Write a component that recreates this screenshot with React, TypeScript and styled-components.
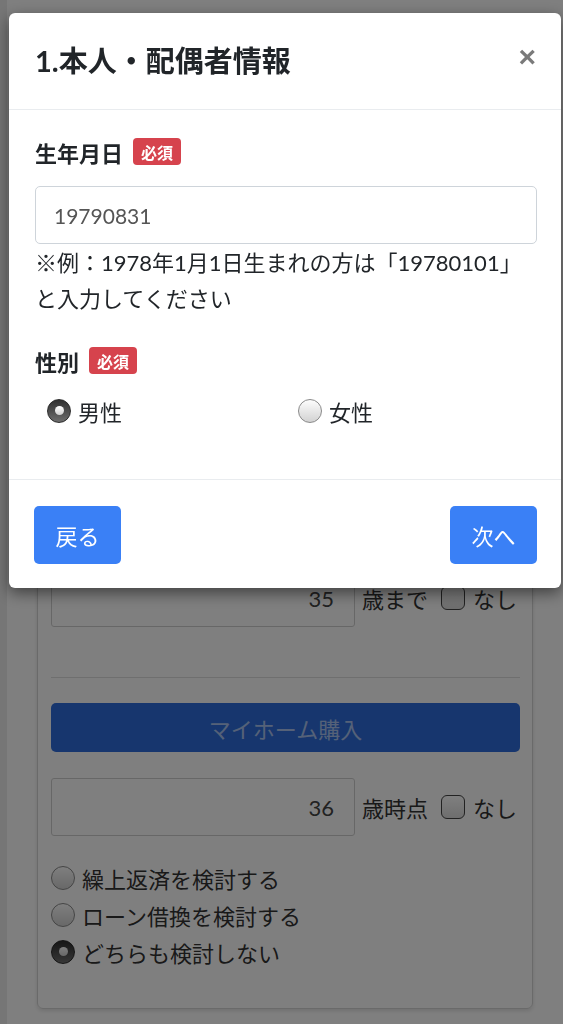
import styled, { createGlobalStyle } from 'styled-components';

const GlobalStyle = createGlobalStyle`
  html, body {
    margin: 0;
    padding: 0;
  }
  body {
    background: #ececec;
    font-family: Lato, "Noto Sans CJK JP", sans-serif;
    color: #212529;
  }
`;

const FONT = `Lato, "Noto Sans CJK JP", sans-serif`;

/* ---------- page behind the modal ---------- */

const Page = styled.div`
  width: 563px;
  height: 1024px;
  overflow: hidden;
  padding-left: 7px;
  box-sizing: border-box;
`;

const Sheet = styled.div`
  background: #ffffff;
  min-height: 1024px;
  padding: 92px 30px 16px 30px;
  box-sizing: border-box;
`;

const Card = styled.div`
  border: 1px solid #d4d4d4;
  border-radius: 6px;
  box-shadow: 0 2px 4px rgba(0, 0, 0, 0.12);
  padding: 24px 12px 38px 13px;
`;

const Section = styled.div`
  display: flex;
  flex-direction: column;
  gap: 26px;
`;

const Divider = styled.div`
  height: 1px;
  background: #dedede;
  margin: 50px 0 25px;
`;

const EventButton = styled.div`
  height: 49px;
  border-radius: 5px;
  background: #2e6ddc;
  color: rgba(255, 255, 255, 0.6);
  font-size: 22px;
  display: flex;
  align-items: center;
  justify-content: center;
`;

const FieldRow = styled.div`
  display: flex;
  align-items: center;
  font-size: 22px;
  color: #333;
`;

const NumInput = styled.div`
  width: 304px;
  height: 58px;
  box-sizing: border-box;
  border: 1px solid #cfcfcf;
  border-radius: 3px;
  display: flex;
  align-items: center;
  justify-content: flex-end;
  padding-right: 20px;
  font-size: 22px;
  color: #444;
`;

const Unit = styled.span`
  margin-left: 7px;
`;

const CheckBox = styled.span`
  margin-left: 13px;
  width: 22px;
  height: 22px;
  border: 1.5px solid #444;
  border-radius: 6px;
  background: linear-gradient(#ffffff, #dcdcdc);
`;

const NoneLabel = styled.span`
  margin-left: 8px;
`;

const RadioList = styled.div`
  display: flex;
  flex-direction: column;
  margin-top: -3px;
`;

const RadioRow = styled.label`
  height: 37px;
  display: flex;
  align-items: center;
  gap: 7px;
  font-size: 22px;
  color: #333;
`;

/* ---------- radio drawing ---------- */

const RadioDot = styled.span<{ $checked?: boolean }>`
  position: relative;
  flex: none;
  width: 24px;
  height: 24px;
  box-sizing: border-box;
  border-radius: 50%;
  border: 1px solid ${(p) => (p.$checked ? '#2c2c2c' : '#8a8a8a')};
  background: ${(p) =>
    p.$checked
      ? 'linear-gradient(#2e2e2e, #6e6e6e)'
      : 'linear-gradient(#fdfdfd, #d2d2d2)'};

  &::after {
    content: '';
    display: ${(p) => (p.$checked ? 'block' : 'none')};
    position: absolute;
    left: 50%;
    top: 50%;
    width: 9px;
    height: 9px;
    margin: -4.5px 0 0 -4.5px;
    border-radius: 50%;
    background: linear-gradient(#ffffff, #d0d0d0);
  }
`;

/* ---------- modal ---------- */

const Overlay = styled.div`
  position: fixed;
  inset: 0;
  background: rgba(0, 0, 0, 0.5);
  padding: 13px 2px 0 9px;
  display: flex;
  align-items: flex-start;
`;

const Modal = styled.div`
  flex: 1;
  background: #ffffff;
  border-radius: 6px;
  box-shadow: 0 5px 15px rgba(0, 0, 0, 0.5);
`;

const ModalHeader = styled.div`
  display: flex;
  align-items: center;
  justify-content: space-between;
  padding: 27px 25px 27px 26px;
  border-bottom: 1px solid #e9ecef;
`;

const Title = styled.h5`
  margin: 0;
  font-size: 29px;
  line-height: 42px;
  font-weight: 700;
  color: #212529;
`;

const Close = styled.span`
  font-family: 'Liberation Sans', Arial, sans-serif;
  font-size: 30px;
  font-weight: 700;
  line-height: 1;
  color: #7a7a7a;
  margin-top: -8px;
`;

const ModalBody = styled.div`
  padding: 25px 24px 52px 26px;
`;

const Label = styled.div<{ $gap?: number }>`
  display: flex;
  align-items: center;
  height: 33px;
  font-size: 22px;
  font-weight: 700;
  color: #212529;
  margin-top: ${(p) => p.$gap ?? 0}px;
`;

const Badge = styled.span`
  margin-left: 10px;
  height: 27px;
  padding: 0 8px;
  border-radius: 4px;
  background: #d6434d;
  color: #ffffff;
  font-size: 16px;
  font-weight: 700;
  display: flex;
  align-items: center;
`;

const DateInput = styled.input`
  display: block;
  width: 100%;
  height: 58px;
  box-sizing: border-box;
  margin-top: 18px;
  padding: 0 18px;
  border: 1px solid #ced4da;
  border-radius: 5px;
  font-family: ${FONT};
  font-size: 21px;
  color: #555;
  outline: none;
`;

const Help = styled.p`
  margin: 1px 0 0;
  font-size: 22px;
  line-height: 36px;
  color: #212529;
`;

const GenderRow = styled.div`
  display: grid;
  grid-template-columns: 1fr 1fr;
  margin-top: 17px;
`;

const GenderOption = styled.label`
  display: flex;
  align-items: center;
  gap: 7px;
  height: 33px;
  padding-left: 12px;
  font-size: 22px;
  color: #212529;
`;

const ModalFooter = styled.div`
  display: flex;
  justify-content: space-between;
  padding: 26px 24px 24px 25px;
  border-top: 1px solid #e9ecef;
`;

const Button = styled.button`
  width: 87px;
  height: 58px;
  border: none;
  border-radius: 5px;
  background: #3a80f6;
  color: #ffffff;
  font-family: ${FONT};
  font-size: 22px;
  padding: 0;
`;

export default function App() {
  return (
    <>
      <GlobalStyle />
      <Page>
        <Sheet>
          <Card>
            <Section>
              <EventButton>結婚</EventButton>
              <FieldRow>
                <NumInput>30</NumInput>
                <Unit>歳時点</Unit>
                <CheckBox />
                <NoneLabel>なし</NoneLabel>
              </FieldRow>
              <FieldRow>
                <NumInput>2</NumInput>
                <Unit>人</Unit>
              </FieldRow>
            </Section>
            <Divider />
            <Section>
              <EventButton>子育て</EventButton>
              <FieldRow>
                <NumInput>32</NumInput>
                <Unit>歳から</Unit>
                <CheckBox />
                <NoneLabel>なし</NoneLabel>
              </FieldRow>
              <FieldRow>
                <NumInput>35</NumInput>
                <Unit>歳まで</Unit>
                <CheckBox />
                <NoneLabel>なし</NoneLabel>
              </FieldRow>
            </Section>
            <Divider />
            <Section>
              <EventButton>マイホーム購入</EventButton>
              <FieldRow>
                <NumInput>36</NumInput>
                <Unit>歳時点</Unit>
                <CheckBox />
                <NoneLabel>なし</NoneLabel>
              </FieldRow>
              <RadioList>
                <RadioRow>
                  <RadioDot />
                  繰上返済を検討する
                </RadioRow>
                <RadioRow>
                  <RadioDot />
                  ローン借換を検討する
                </RadioRow>
                <RadioRow>
                  <RadioDot $checked />
                  どちらも検討しない
                </RadioRow>
              </RadioList>
            </Section>
          </Card>
        </Sheet>
      </Page>

      <Overlay>
        <Modal>
          <ModalHeader>
            <Title>1.本人・配偶者情報</Title>
            <Close>×</Close>
          </ModalHeader>
          <ModalBody>
            <Label>
              生年月日<Badge>必須</Badge>
            </Label>
            <DateInput readOnly value="19790831" />
            <Help>
              ※例：1978年1月1日生まれの方は「19780101」と入力してください
            </Help>
            <Label $gap={27}>
              性別<Badge>必須</Badge>
            </Label>
            <GenderRow>
              <GenderOption>
                <RadioDot $checked />
                男性
              </GenderOption>
              <GenderOption>
                <RadioDot />
                女性
              </GenderOption>
            </GenderRow>
          </ModalBody>
          <ModalFooter>
            <Button>戻る</Button>
            <Button>次へ</Button>
          </ModalFooter>
        </Modal>
      </Overlay>
    </>
  );
}
